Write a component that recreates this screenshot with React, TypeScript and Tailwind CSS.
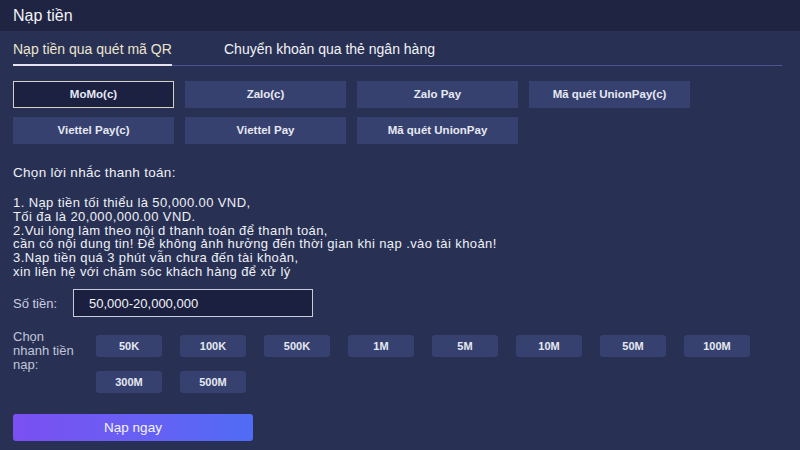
import React from "react";

const methods1 = ["MoMo(c)", "Zalo(c)", "Zalo Pay", "Mã quét UnionPay(c)"];
const methods2 = ["Viettel Pay(c)", "Viettel Pay", "Mã quét UnionPay"];
const amounts1 = ["50K", "100K", "500K", "1M", "5M", "10M", "50M", "100M"];
const amounts2 = ["300M", "500M"];

function MethodBtn({ label, active }: { label: string; active?: boolean }) {
  return (
    <div
      className={
        "w-[161px] h-[27px] flex items-center justify-center text-[11.5px] font-bold text-[#e6e8f2] " +
        (active ? "bg-[#1c2142] border border-[#d8d0c0]" : "bg-[#36416f]")
      }
    >
      {label}
    </div>
  );
}

function AmtBtn({ label }: { label: string }) {
  return (
    <div className="w-[66px] h-[22px] flex items-center justify-center rounded-[3px] bg-[#36416f] text-[11px] font-bold text-[#e6e8f2]">
      {label}
    </div>
  );
}

export default function App() {
  return (
    <div
      className="w-[800px] h-[450px] overflow-hidden bg-[#283154] text-[#eef0f6] flex flex-col"
      style={{ fontFamily: '"Liberation Sans", Arial, sans-serif' }}
    >
      <div className="h-[31px] bg-[#1f2442] flex items-center px-[13px] text-[16px] text-[#f2f3f7]">
        Nạp tiền
      </div>
      <div className="flex flex-col px-[13px]">
        <div className="flex mt-[8px] mr-[5px] border-b border-[#4a5590]">
          <div className="relative pb-[5px] text-[14px] text-[#ece4cc] w-[159px] whitespace-nowrap">
            Nạp tiền qua quét mã QR
            <div className="absolute left-0 right-0 bottom-[-1px] h-[2px] bg-[#e6e2ee]" />
          </div>
          <div className="ml-[52px] text-[14px] text-[#f2f3f7]">Chuyển khoản qua thẻ ngân hàng</div>
        </div>
        <div className="flex gap-[11px] mt-[15px]">
          {methods1.map((m, i) => (
            <MethodBtn key={m} label={m} active={i === 0} />
          ))}
        </div>
        <div className="flex gap-[11px] mt-[9px]">
          {methods2.map((m) => (
            <MethodBtn key={m} label={m} />
          ))}
        </div>
        <div className="mt-[19px] text-[13.5px] tracking-[0.3px]">Chọn lời nhắc thanh toán:</div>
        <div className="mt-[13px] text-[13px] leading-[13.7px] tracking-[0.4px]">
          <div>1. Nạp tiền tối thiểu là 50,000.00 VND,</div>
          <div>Tối đa là 20,000,000.00 VND.</div>
          <div>2.Vui lòng làm theo nội d thanh toán để thanh toán,</div>
          <div>cần có nội dung tin! Để không ảnh hưởng đến thời gian khi nạp .vào tài khoản!</div>
          <div>3.Nạp tiền quá 3 phút vẫn chưa đến tài khoản,</div>
          <div>xin liên hệ với chăm sóc khách hàng để xử lý</div>
        </div>
        <div className="flex items-center mt-[11px]">
          <div className="w-[60px] text-[13px] text-[#c9cde0]">Số tiền:</div>
          <div className="w-[240px] h-[28px] bg-[#1b2040] border border-[#c8ccd8] flex items-center pl-[15px] text-[13px] text-[#f2f3f7]">
            50,000-20,000,000
          </div>
        </div>
        <div className="flex mt-[13px]">
          <div className="w-[83px] text-[13px] leading-[14px] text-[#c0c5da]">
            Chọn
            <br />
            nhanh tiền
            <br />
            nạp:
          </div>
          <div className="flex flex-col gap-[14px] pt-[5px]">
            <div className="flex gap-[18px]">
              {amounts1.map((a) => (
                <AmtBtn key={a} label={a} />
              ))}
            </div>
            <div className="flex gap-[18px]">
              {amounts2.map((a) => (
                <AmtBtn key={a} label={a} />
              ))}
            </div>
          </div>
        </div>
        <div className="mt-[21px] w-[240px] h-[27px] rounded-[3px] bg-gradient-to-r from-[#7b4ff2] to-[#4f6cf5] flex items-center justify-center text-[13.5px] text-[#f4f4fa]">
          Nạp ngay
        </div>
      </div>
    </div>
  );
}
